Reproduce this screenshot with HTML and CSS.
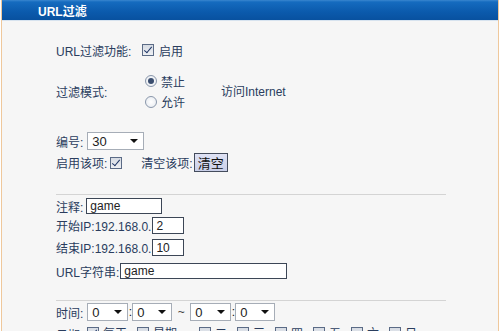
FILE: index.html
```html
<!DOCTYPE html>
<html>
<head>
<meta charset="utf-8">
<link rel="stylesheet" href="styles.css">
</head>
<body>
<div class="frame">
  <div class="header"><span class="title">URL过滤</span></div>
  <div class="content">
    <div class="row r1">
      <span class="lbl w86">URL过滤功能:</span>
      <span class="cb checked"></span><span class="cbt">启用</span>
    </div>
    <div class="mode">
      <span class="mlabel">过滤模式:</span>
      <div class="radios">
        <div class="ropt"><span class="radio on"></span><span>禁止</span></div>
        <div class="ropt"><span class="radio"></span><span>允许</span></div>
      </div>
      <span class="mtarget">访问Internet</span>
    </div>
    <div class="row r-num">
      <span class="lbl">编号:</span>
      <span class="sel w57"><span class="sv">30</span><span class="arr"></span></span>
    </div>
    <div class="row r-en">
      <span class="lbl">启用该项:</span>
      <span class="cb checked"></span>
      <span class="lbl clr">清空该项:</span>
      <span class="btn">清空</span>
    </div>
    <div class="hr hr1"></div>
    <div class="row r-note">
      <span class="lbl">注释:</span>
      <span class="inp w76">game</span>
    </div>
    <div class="row r-start">
      <span class="lbl tight">开始IP:192.168.0.</span>
      <span class="inp w32">2</span>
    </div>
    <div class="row r-end">
      <span class="lbl tight">结束IP:192.168.0.</span>
      <span class="inp w32">10</span>
    </div>
    <div class="row r-url">
      <span class="lbl tight">URL字符串:</span>
      <span class="inp w167">game</span>
    </div>
    <div class="hr hr2"></div>
    <div class="row r-time">
      <span class="lbl">时间:</span>
      <span class="sel w41"><span class="sv">0</span><span class="arr"></span></span>
      <span class="colon">:</span>
      <span class="sel w40"><span class="sv">0</span><span class="arr"></span></span>
      <span class="tilde">~</span>
      <span class="sel w41"><span class="sv">0</span><span class="arr"></span></span>
      <span class="colon">:</span>
      <span class="sel w40"><span class="sv">0</span><span class="arr"></span></span>
    </div>
    <div class="row r-date">
      <span class="lbl">日期:</span>
      <span class="day"><span class="cb checked"></span><span>每天</span></span>
      <span class="day"><span class="cb"></span><span>星期一</span></span>
      <span class="day"><span class="cb"></span><span>二</span></span>
      <span class="day"><span class="cb"></span><span>三</span></span>
      <span class="day"><span class="cb"></span><span>四</span></span>
      <span class="day"><span class="cb"></span><span>五</span></span>
      <span class="day"><span class="cb"></span><span>六</span></span>
      <span class="day"><span class="cb"></span><span>日</span></span>
    </div>
  </div>
</div>
</body>
</html>
```
FILE: styles.css
```css
html, body {
  margin: 0;
  padding: 0;
  background: #ffffff;
}
body {
  width: 500px;
  height: 331px;
  overflow: hidden;
  font-family: "Liberation Sans", "Noto Sans CJK SC", sans-serif;
  font-size: 12px;
  color: #2a3d5e;
}
.frame {
  margin-left: 1px;
  width: 496px;
  height: 331px;
  border-left: 1px solid #efc89c;
  border-right: 1px solid #efc89c;
  background: #f6f6f6;
  overflow: hidden;
}
.header {
  height: 21px;
  background: linear-gradient(to bottom, #3a86cf 0px, #156bbf 2px, #0b5aac 12px, #08509e 21px);
  border-bottom: 1px solid #d7e3ef;
  box-sizing: border-box;
  display: flex;
  align-items: center;
}
.title {
  margin-left: 36px;
  color: #ffffff;
  font-weight: bold;
  font-size: 12px;
}
.content {
  padding-left: 54px;
}
.row {
  display: flex;
  align-items: center;
}
.lbl {
  margin-right: 4px;
  white-space: nowrap;
}
.lbl.tight { margin-right: 1px; }
.w86 { width: 82px; margin-right: 4px; }
.r1 { margin-top: 20px; height: 18px; }
.cb {
  display: inline-block;
  width: 12px;
  height: 12px;
  box-sizing: border-box;
  border: 1px solid #5b6b86;
  background: linear-gradient(#d6dbe3, #eef0f4);
  position: relative;
  flex: none;
}
.cb.checked::after {
  content: "";
  position: absolute;
  left: 3px;
  top: 0px;
  width: 3px;
  height: 7px;
  border-right: 1.5px solid #1e3566;
  border-bottom: 1.5px solid #1e3566;
  transform: rotate(40deg);
}
.cbt { margin-left: 5px; }
.mode {
  margin-top: 12px;
  height: 41px;
  display: flex;
  align-items: center;
}
.mlabel { width: 89px; }
.radios {
  width: 76px;
  display: flex;
  flex-direction: column;
}
.ropt {
  height: 20px;
  display: flex;
  align-items: center;
}
.ropt + .ropt { height: 21px; }
.radio {
  width: 10px;
  height: 10px;
  border-radius: 50%;
  border: 1px solid #8a97ab;
  background: radial-gradient(circle, #ffffff 0, #e4e8ee 100%);
  margin-right: 4px;
  position: relative;
  flex: none;
}
.radio.on::after {
  content: "";
  position: absolute;
  left: 2px;
  top: 2px;
  width: 6px;
  height: 6px;
  border-radius: 50%;
  background: #3a4d6e;
}
.mtarget { margin-top: -2px; }
.r-num { margin-top: 20px; height: 18px; }
.sel {
  display: inline-flex;
  align-items: center;
  justify-content: space-between;
  height: 18px;
  box-sizing: border-box;
  border: 1px solid #a6adb7;
  background: #ffffff;
  padding: 0 5px 0 4px;
  color: #222222;
  font-size: 13px;
  flex: none;
}
.arr {
  width: 0;
  height: 0;
  border-left: 4px solid transparent;
  border-right: 4px solid transparent;
  border-top: 4px solid #111111;
}
.w57 { width: 57px; }
.w41 { width: 41px; }
.w40 { width: 40px; }
.r-en { margin-top: 3px; height: 19px; }
.r-en .cb { margin-left: -1px; }
.clr { margin-left: 19px; margin-right: 1px; }
.btn {
  display: inline-flex;
  align-items: center;
  justify-content: center;
  width: 34px;
  height: 19px;
  box-sizing: border-box;
  border: 1px solid #444c5c;
  background: linear-gradient(#dfe2f4, #c9cfe8);
  color: #111111;
  font-size: 13px;
}
.hr {
  height: 1px;
  background: #d4d4d4;
  width: 390px;
  margin-left: 0;
}
.hr1 { margin-top: 22px; }
.hr2 { margin-top: 21px; }
.inp {
  display: inline-flex;
  align-items: center;
  box-sizing: border-box;
  border: 1px solid #3c4656;
  background: #ffffff;
  color: #222222;
  padding-left: 3px;
  font-size: 12px;
  flex: none;
}
.r-note { margin-top: 3px; height: 16px; }
.r-note .inp { height: 16px; margin-left: -1px; }
.w76 { width: 76px; }
.w32 { width: 32px; }
.w167 { width: 167px; }
.r-start { margin-top: 3px; height: 17px; }
.r-start .inp, .r-end .inp { height: 17px; }
.r-end { margin-top: 5px; height: 17px; }
.r-url { margin-top: 7px; height: 16px; }
.r-url .inp { height: 16px; }
.r-time { margin-top: 2px; height: 18px; }
.colon { width: 4px; text-align: center; color: #111; }
.tilde { width: 18px; text-align: center; color: #444; }
.r-date { margin-top: 5px; height: 16px; align-items: flex-start; }
.r-date .lbl { width: 27px; margin-right: 4px; }
.day {
  display: inline-flex;
  align-items: flex-start;
  margin-right: 10px;
  padding-top: 1px;
}
.day .cb { margin-right: 4px; margin-top: 0; }
.day span:last-child { margin-top: -3px; }
```
